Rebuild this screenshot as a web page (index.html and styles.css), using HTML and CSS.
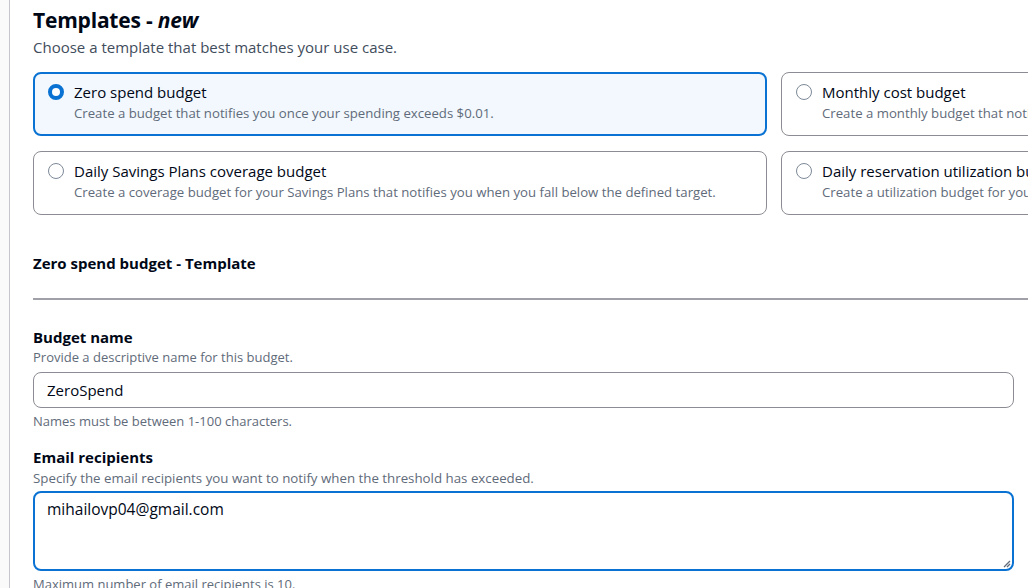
FILE: index.html
```html
<!DOCTYPE html>
<html lang="en">
<head>
<meta charset="utf-8">
<title>Create budget - Templates</title>
<link rel="stylesheet" href="styles.css">
</head>
<body>
<div class="page">
  <div class="panel">
    <h2 class="title">Templates - <em>new</em></h2>
    <p class="subtitle">Choose a template that best matches your use case.</p>

    <div class="tiles">
      <label class="tile selected">
        <span class="radio checked"></span>
        <span class="tile-text">
          <span class="tile-title">Zero spend budget</span>
          <span class="tile-desc">Create a budget that notifies you once your spending exceeds $0.01.</span>
        </span>
      </label>
      <label class="tile">
        <span class="radio"></span>
        <span class="tile-text">
          <span class="tile-title">Monthly cost budget</span>
          <span class="tile-desc">Create a monthly budget that notifies you if you exceed, or are forecasted to exceed, the budget amount.</span>
        </span>
      </label>
      <label class="tile">
        <span class="radio"></span>
        <span class="tile-text">
          <span class="tile-title">Daily Savings Plans coverage budget</span>
          <span class="tile-desc">Create a coverage budget for your Savings Plans that notifies you when you fall below the defined target.</span>
        </span>
      </label>
      <label class="tile">
        <span class="radio"></span>
        <span class="tile-text">
          <span class="tile-title">Daily reservation utilization budget</span>
          <span class="tile-desc">Create a utilization budget for your reservations that notifies you when you fall below the defined target.</span>
        </span>
      </label>
    </div>

    <h3 class="section-title">Zero spend budget - Template</h3>
    <hr class="divider">

    <div class="field">
      <div class="field-label">Budget name</div>
      <div class="field-desc">Provide a descriptive name for this budget.</div>
      <div class="input">ZeroSpend</div>
      <div class="field-hint">Names must be between 1-100 characters.</div>
    </div>

    <div class="field field-second">
      <div class="field-label">Email recipients</div>
      <div class="field-desc wide">Specify the email recipients you want to notify when the threshold has exceeded.</div>
      <div class="textarea">
        mihailovp04@gmail.com
        <svg class="grip" width="10" height="10" viewBox="0 0 10 10"><path d="M9 3 L3 9 M9 6 L6 9" stroke="#5f6b7a" stroke-width="1.3" fill="none"/></svg>
      </div>
      <div class="field-hint">Maximum number of email recipients is 10.</div>
    </div>
  </div>
</div>
</body>
</html>
```

FILE: styles.css
```css
* { box-sizing: border-box; }
html, body {
  margin: 0;
  padding: 0;
  background: #fafafa;
  overflow: hidden;
  width: 1028px;
  height: 588px;
}
body {
  font-family: "Open Sans", "Noto Sans", Arial, sans-serif;
  color: #000716;
}
.page {
  padding-left: 9px;
  margin-top: -20px;
}
.panel {
  background: #ffffff;
  border: 1px solid #c6c6cd;
  border-radius: 12px;
  padding: 20px 0 40px 23px;
  width: 1600px;
}
.title {
  margin: 3px 0 0;
  font-size: 21px;
  line-height: 32px;
  font-weight: 700;
  letter-spacing: -0.2px;
}
.title em {
  font-style: italic;
}
.subtitle {
  margin: 0;
  font-size: 15px;
  line-height: 22px;
  color: #414d5c;
}
.tiles {
  margin-top: 14px;
  display: grid;
  grid-template-columns: 734px 734px;
  column-gap: 14px;
  row-gap: 15px;
}
.tile {
  display: flex;
  align-items: flex-start;
  gap: 10px;
  height: 64px;
  border: 1px solid #8c8c94;
  border-radius: 8px;
  padding: 8px 14px;
  background: #ffffff;
  overflow: hidden;
}
.tile.selected {
  border: 2px solid #0972d3;
  background: #f2f8fd;
  padding: 7px 13px;
}
.radio {
  flex: none;
  width: 16px;
  height: 16px;
  margin-top: 3px;
  border-radius: 50%;
  border: 1.5px solid #7d8998;
  background: #ffffff;
}
.radio.checked {
  border: 4.5px solid #0972d3;
}
.tile-text {
  display: flex;
  flex-direction: column;
  white-space: nowrap;
}
.tile-title {
  font-size: 15px;
  line-height: 22px;
}
.tile-desc {
  font-size: 13.2px;
  line-height: 20px;
  color: #5f6b7a;
}
.section-title {
  margin: 37px 0 0;
  font-size: 15px;
  line-height: 22px;
  font-weight: 700;
}
.divider {
  margin: 24px 0 0;
  border: 0;
  border-top: 2px solid #a0a0a8;
  height: 0;
}
.field {
  margin-top: 27px;
  width: 981px;
}
.field-second {
  margin-top: 16px;
}
.field-label {
  font-size: 15px;
  line-height: 20px;
  font-weight: 700;
}
.field-desc {
  font-size: 13px;
  line-height: 20px;
  color: #5f6b7a;
}
.field-desc.wide {
  font-size: 13.3px;
  line-height: 22px;
}
.input {
  margin-top: 5px;
  height: 36px;
  border: 1px solid #8c8c94;
  border-radius: 8px;
  padding: 0 13px;
  font-size: 15px;
  line-height: 34px;
}
.textarea {
  position: relative;
  margin-top: 2px;
  height: 80px;
  border: 2px solid #0972d3;
  border-radius: 8px;
  padding: 5px 12px;
  font-size: 15.5px;
  line-height: 22px;
}
.grip {
  position: absolute;
  right: 1px;
  bottom: 1px;
}
.field-hint {
  margin-top: 3px;
  font-size: 13px;
  line-height: 20px;
  color: #5f6b7a;
}
```
